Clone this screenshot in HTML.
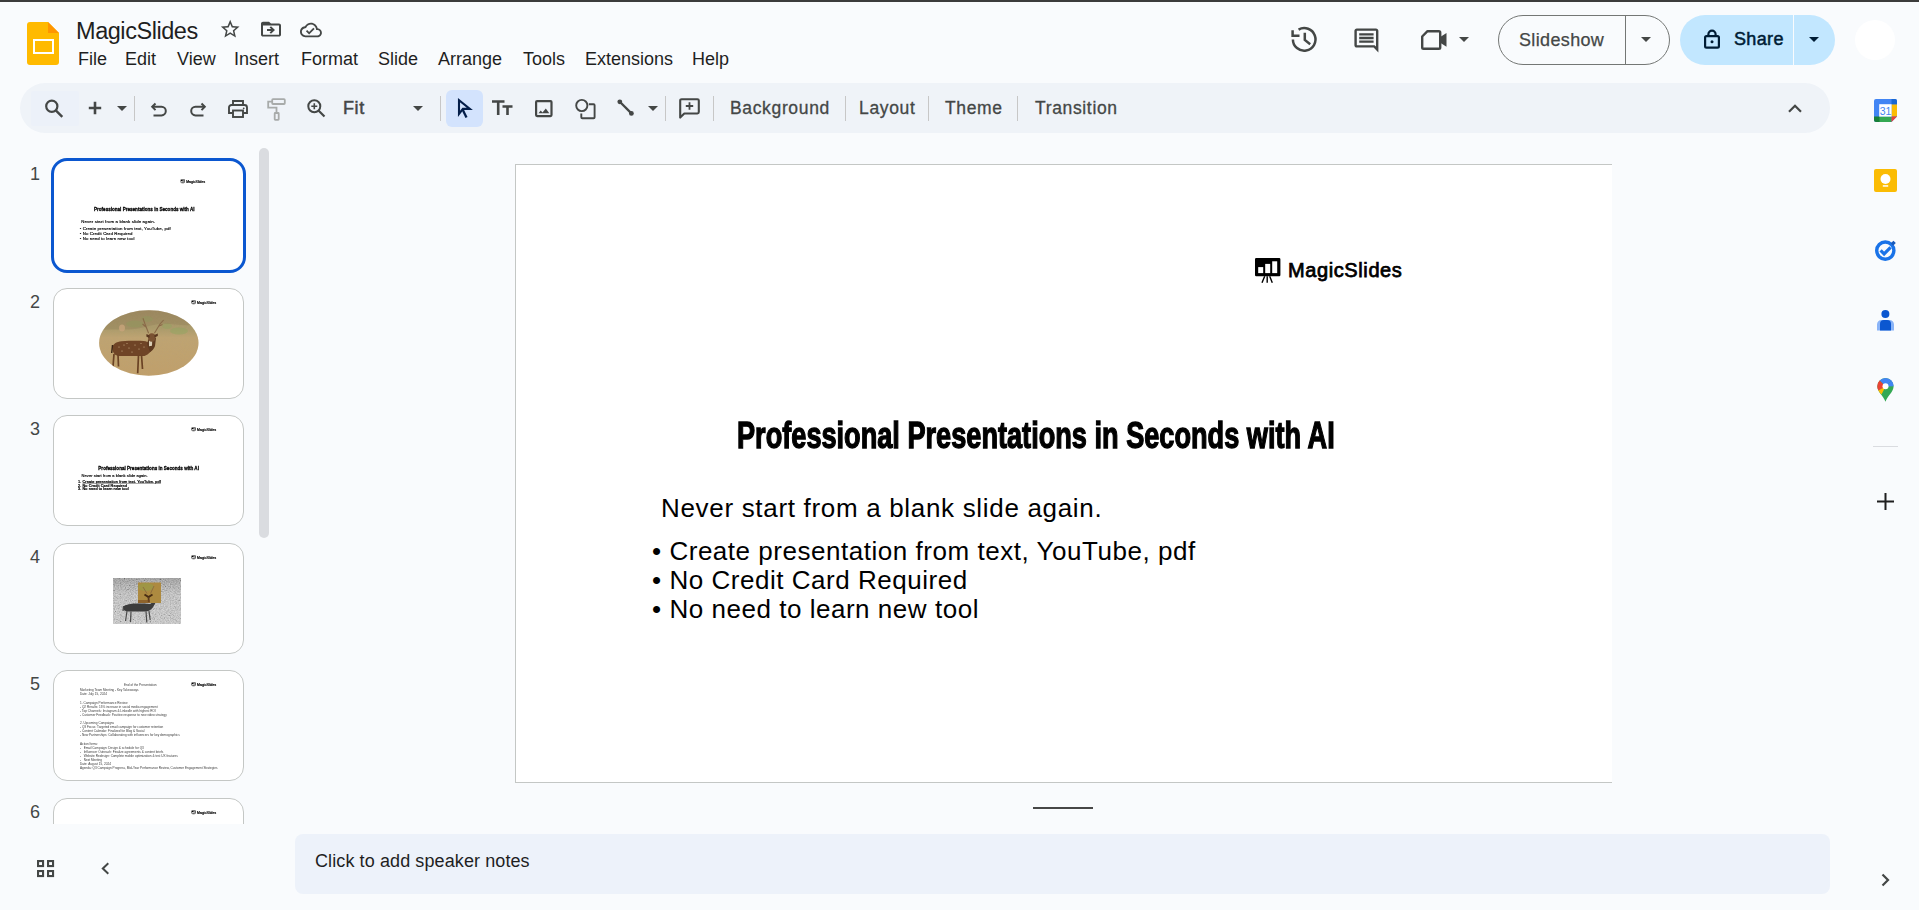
<!DOCTYPE html>
<html><head><meta charset="utf-8">
<style>
*{box-sizing:border-box;margin:0;padding:0}
html,body{width:1919px;height:910px;overflow:hidden;background:#f9fbfd;font-family:"Liberation Sans",sans-serif;color:#1f1f1f}
.a{position:absolute}
svg{position:absolute;overflow:visible}
.menu{position:absolute;top:49px;font-size:18px;line-height:20px;color:#1f1f1f;white-space:nowrap}
.tb{position:absolute;left:20px;top:83px;width:1810px;height:50px;border-radius:25px;background:#eff3f8}
.sep{position:absolute;top:96px;width:1px;height:25px;background:#c7c7c7}
.tbt{position:absolute;top:98px;font-size:17.5px;line-height:20px;color:#444746;white-space:nowrap;letter-spacing:.65px;-webkit-text-stroke:.3px #444746}
.num{position:absolute;left:30px;font-size:18px;line-height:20px;color:#444746}
.thumb{position:absolute;left:53px;width:191px;height:111px;border:1px solid #c4c7c5;border-radius:14px;background:#fff;overflow:hidden}
.slide{position:absolute;left:0;top:0;width:1096px;height:617px;background:#fff}
.ttl{position:absolute;white-space:nowrap;font-weight:bold;font-size:35px;line-height:40px;color:#000;transform-origin:0 0}
.body{position:absolute;white-space:nowrap;font-size:26px;color:#000;letter-spacing:.53px}
.tcx .body{-webkit-text-stroke:.9px #000}
.tcx .ttl{-webkit-text-stroke:2px #000}
</style></head><body>
<div class="a" style="left:0;top:0;width:1919px;height:2px;background:#3c3c3c"></div>

<!-- Slides logo -->
<svg style="left:27px;top:22px" width="32" height="43" viewBox="0 0 32 43">
<path d="M3 0H21L32 11V40a3 3 0 0 1-3 3H3a3 3 0 0 1-3-3V3a3 3 0 0 1 3-3z" fill="#ffba00"/>
<path d="M21 0L32 11H21z" fill="#ff9500"/>
<rect x="7" y="18" width="19" height="13" fill="none" stroke="#fff" stroke-width="2"/>
</svg>
<div class="a" style="left:76px;top:18px;font-size:23.5px;line-height:26px;color:#1f1f1f;letter-spacing:-.45px">MagicSlides</div>

<!-- header icons -->
<svg style="left:219.2px;top:18px" width="22.4" height="22.4" viewBox="0 0 24 24"><path d="M22 9.24l-7.19-.62L12 2 9.19 8.63 2 9.24l5.46 4.73L5.82 21 12 17.27 18.18 21l-1.63-7.03L22 9.24zM12 15.4l-3.76 2.27 1-4.28-3.32-2.88 4.38-.38L12 6.1l1.71 4.04 4.38.38-3.32 2.88 1 4.28L12 15.4z" fill="#444746"/></svg>
<svg style="left:259px;top:18.1px" width="24" height="22.2" viewBox="0 0 24 24" preserveAspectRatio="none"><path d="M20 6h-8l-2-2H4c-1.1 0-2 .9-2 2v12c0 1.1.9 2 2 2h16c1.1 0 2-.9 2-2V8c0-1.1-.9-2-2-2zm0 12H4V8h16v10zm-8.01-9l-1.41 1.41L12.16 12H8v2h4.16l-1.59 1.59L11.99 17 16 13.01 11.99 9z" fill="#444746"/></svg>
<svg style="left:299.8px;top:18.8px" width="21.9" height="21.9" viewBox="0 0 24 24"><path d="M19.35 10.04C18.67 6.59 15.64 4 12 4 9.11 4 6.6 5.64 5.35 8.040 2.34 8.36 0 10.91 0 14c0 3.31 2.69 6 6 6h13c2.76 0 5-2.24 5-5 0-2.64-2.05-4.78-4.65-4.960zM19 18H6c-2.21 0-4-1.79-4-4 0-2.05 1.53-3.76 3.56-3.97l1.07-.11.5-.95C8.08 7.14 9.94 6 12 6c2.62 0 4.88 1.86 5.39 4.43l.3 1.5 1.53.11c1.56.1 2.78 1.41 2.78 2.96 0 1.65-1.35 3-3 3zm-9-3.82l-2.09-2.09L6.5 13.5 10 17l6.01-6.01-1.41-1.41z" fill="#444746"/></svg>

<!-- menu -->
<div class="menu" style="left:78px">File</div>
<div class="menu" style="left:125px">Edit</div>
<div class="menu" style="left:177px">View</div>
<div class="menu" style="left:234px">Insert</div>
<div class="menu" style="left:301px">Format</div>
<div class="menu" style="left:378px">Slide</div>
<div class="menu" style="left:438px">Arrange</div>
<div class="menu" style="left:523px">Tools</div>
<div class="menu" style="left:585px">Extensions</div>
<div class="menu" style="left:692px">Help</div>

<!-- right header -->
<svg style="left:1291px;top:26px" width="26" height="26" viewBox="0 0 26 26"><path d="M7.55 3.6A11.3 11.3 0 1 1 1.9 13.4" fill="none" stroke="#444746" stroke-width="2.5"/><path d="M1.6 4.2v5.6h6.9" fill="none" stroke="#444746" stroke-width="2.5"/><path d="M13.8 6.8V14l5.4 4.2" fill="none" stroke="#444746" stroke-width="2.5"/></svg>
<svg style="left:1351.6px;top:25.6px" width="28.8" height="28.8" viewBox="0 0 24 24"><path d="M21.99 4c0-1.1-.89-2-1.99-2H4c-1.1 0-2 .9-2 2v12c0 1.1.9 2 2 2h14l4 4-.01-18zM20 4v13.17L18.83 16H4V4h16zM6 12h12v2H6zm0-3h12v2H6zm0-3h12v2H6z" fill="#444746"/></svg>
<svg style="left:1421px;top:30px" width="26" height="20" viewBox="0 0 26 20"><path d="M6.5 1.2h11.4a1.3 1.3 0 0 1 1.3 1.3v14.9a1.3 1.3 0 0 1-1.3 1.3H2.5a1.3 1.3 0 0 1-1.3-1.3V6.5z" fill="none" stroke="#444746" stroke-width="2.4" stroke-linejoin="round"/><path d="M19.2 7l6.3-4v13.8l-6.3-4z" fill="#444746"/></svg>
<svg style="left:1459px;top:37px" width="10" height="5" viewBox="0 0 10 5"><path d="M0 0h10L5 5z" fill="#444746"/></svg>

<div class="a" style="left:1498px;top:15px;width:172px;height:50px;border:1px solid #747775;border-radius:25px"></div>
<div class="a" style="left:1625px;top:15px;width:1px;height:50px;background:#747775"></div>
<div class="a" style="left:1519px;top:30px;font-size:18px;line-height:20px;color:#444746;letter-spacing:.35px;-webkit-text-stroke:.25px #444746">Slideshow</div>
<svg style="left:1641px;top:37px" width="10" height="5" viewBox="0 0 10 5"><path d="M0 0h10L5 5z" fill="#444746"/></svg>

<div class="a" style="left:1680px;top:15px;width:155px;height:50px;border-radius:25px;background:#c2e7ff"></div>
<div class="a" style="left:1793px;top:15px;width:1px;height:50px;background:#f9fbfd"></div>
<svg style="left:1704px;top:28.8px" width="16" height="20" viewBox="0 0 16 20"><rect x="1.1" y="7.1" width="13.8" height="11.6" rx="1.4" fill="none" stroke="#001d35" stroke-width="2.2"/><path d="M4.4 7.1V5.2a3.6 3.6 0 0 1 7.2 0v1.9" fill="none" stroke="#001d35" stroke-width="2.2"/><circle cx="8" cy="12.8" r="1.5" fill="#001d35"/></svg>
<div class="a" style="left:1734px;top:28.5px;font-size:18px;line-height:20px;color:#001d35;letter-spacing:.35px;-webkit-text-stroke:.5px #001d35">Share</div>
<svg style="left:1809px;top:37px" width="10" height="5" viewBox="0 0 10 5"><path d="M0 0h10L5 5z" fill="#001d35"/></svg>
<div class="a" style="left:1855px;top:20px;width:40px;height:40px;border-radius:50%;background:#fff"></div>

<!-- toolbar -->
<div class="tb"></div>
<div class="a" style="left:31px;top:91px;width:48px;height:35px;background:#ecf1f9;border-radius:2px"></div>

<!-- toolbar icons -->
<svg style="left:43px;top:98px" width="22" height="22" viewBox="0 0 22 22"><circle cx="8.8" cy="8.3" r="5.6" fill="none" stroke="#444746" stroke-width="2.2"/><path d="M12.8 12.3l6.5 6.5" stroke="#444746" stroke-width="2.4"/></svg>
<svg style="left:87px;top:100px" width="16" height="16" viewBox="0 0 16 16"><path d="M8 1.8v12.4M1.8 8h12.4" stroke="#444746" stroke-width="2.6"/></svg>
<svg style="left:117px;top:106px" width="10" height="5" viewBox="0 0 10 5"><path d="M0 0h10L5 5z" fill="#444746"/></svg>
<div class="sep" style="left:134px"></div>
<svg style="left:151px;top:102px" width="16" height="15" viewBox="0 0 16 15"><path d="M4.5 1.5L1.2 4.8l3.3 3.3" fill="none" stroke="#444746" stroke-width="2"/><path d="M1.5 4.8h9a4.3 4.3 0 0 1 0 8.6H2.5" fill="none" stroke="#444746" stroke-width="2"/></svg>
<svg style="left:190px;top:102px" width="16" height="15" viewBox="0 0 16 15"><path d="M11.5 1.5l3.3 3.3-3.3 3.3" fill="none" stroke="#444746" stroke-width="2"/><path d="M14.5 4.8h-9a4.3 4.3 0 0 0 0 8.6h8" fill="none" stroke="#444746" stroke-width="2"/></svg>
<svg style="left:228px;top:100px" width="20" height="18" viewBox="0 0 20 18"><path d="M5 5V1h10v4" fill="none" stroke="#444746" stroke-width="1.9"/><path d="M4.5 13H1V7.5a2.5 2.5 0 0 1 2.5-2.5h13A2.5 2.5 0 0 1 19 7.5V13h-3.5" fill="none" stroke="#444746" stroke-width="1.9"/><rect x="5" y="10.5" width="10" height="6.5" fill="none" stroke="#444746" stroke-width="1.9"/><circle cx="15.7" cy="8.3" r=".9" fill="#444746"/></svg>
<svg style="left:267px;top:98px" width="19" height="23" viewBox="0 0 19 23"><rect x="5.2" y="1.2" width="12.6" height="4.8" rx=".8" fill="none" stroke="#a8abaa" stroke-width="1.8"/><path d="M5.2 3.6H1.2v6h8.3v5.5" fill="none" stroke="#a8abaa" stroke-width="1.8"/><rect x="7.7" y="15" width="4" height="6.8" rx=".5" fill="none" stroke="#a8abaa" stroke-width="1.8"/></svg>
<svg style="left:307px;top:99px" width="19" height="19" viewBox="0 0 19 19"><circle cx="7.3" cy="7.3" r="6" fill="none" stroke="#444746" stroke-width="2"/><path d="M11.5 11.5l6 6" stroke="#444746" stroke-width="2.2"/><path d="M7.3 4.3v6M4.3 7.3h6" stroke="#444746" stroke-width="1.6"/></svg>
<div class="a" style="left:343px;top:98px;font-size:18px;line-height:20px;color:#444746;letter-spacing:.6px;-webkit-text-stroke:.5px #444746">Fit</div>
<svg style="left:413px;top:106px" width="10" height="5" viewBox="0 0 10 5"><path d="M0 0h10L5 5z" fill="#444746"/></svg>
<div class="sep" style="left:440px"></div>
<div class="a" style="left:446px;top:90px;width:37px;height:37px;border-radius:6px;background:#d3e3fd"></div>
<svg style="left:457px;top:98px" width="15" height="21" viewBox="0 0 15 21"><path d="M2 2.2V16l3.9-5.1h7z" fill="none" stroke="#041e49" stroke-width="2.1" stroke-linejoin="miter"/><path d="M5.6 11.5l3.9 8" stroke="#041e49" stroke-width="2.3"/></svg>
<svg style="left:492px;top:100px" width="21" height="16" viewBox="0 0 21 16"><path d="M0 1.5h12.5M6.2 1.5V15M10.5 6.5h10M15.5 6.5V15" stroke="#444746" stroke-width="2.6"/></svg>
<svg style="left:535px;top:100px" width="18" height="18" viewBox="0 0 18 18"><rect x="1.1" y="1.1" width="15.4" height="15" rx="1" fill="none" stroke="#444746" stroke-width="2.2"/><path d="M3.5 13.2l2.2-2.6 1.8 1.8 3.3-4 3.5 4.8z" fill="#444746"/></svg>
<svg style="left:575px;top:99px" width="21" height="20" viewBox="0 0 21 20"><circle cx="6.8" cy="6.5" r="5.6" fill="none" stroke="#444746" stroke-width="1.9"/><path d="M13.8 5.2h4.8a1 1 0 0 1 1 1v12a1 1 0 0 1-1 1h-11.3a1 1 0 0 1-1-1v-3.7" fill="none" stroke="#444746" stroke-width="1.9"/></svg>
<svg style="left:617px;top:99px" width="18" height="18" viewBox="0 0 18 18"><path d="M2.8 2.8l11.6 11.6" stroke="#444746" stroke-width="2.3"/><circle cx="2.8" cy="2.8" r="2.4" fill="#444746"/><circle cx="14.4" cy="14.4" r="2.4" fill="#444746"/></svg>
<svg style="left:648px;top:106px" width="10" height="5" viewBox="0 0 10 5"><path d="M0 0h10L5 5z" fill="#444746"/></svg>
<div class="sep" style="left:665px"></div>
<svg style="left:679px;top:98px" width="21" height="21" viewBox="0 0 21 21"><path d="M1.2 2.6a1.4 1.4 0 0 1 1.4-1.4h15.8a1.4 1.4 0 0 1 1.4 1.4v11.5a1.4 1.4 0 0 1-1.4 1.4H5.3l-4.1 4.1z" fill="none" stroke="#444746" stroke-width="2.1" stroke-linejoin="round"/><path d="M10.5 4.3v7.4M6.8 8h7.4" stroke="#444746" stroke-width="1.8"/></svg>
<div class="sep" style="left:713px"></div>
<div class="tbt" style="left:730px">Background</div>
<div class="sep" style="left:845px"></div>
<div class="tbt" style="left:859px">Layout</div>
<div class="sep" style="left:928px"></div>
<div class="tbt" style="left:945px">Theme</div>
<div class="sep" style="left:1017px"></div>
<div class="tbt" style="left:1035px">Transition</div>
<svg style="left:1788px;top:104px" width="14" height="9" viewBox="0 0 14 9"><path d="M1 7.8l6-6 6 6" fill="none" stroke="#444746" stroke-width="2.2"/></svg>

<!-- right sidebar -->
<svg style="left:1874px;top:99px" width="23" height="23" viewBox="0 0 23 23">
<path d="M2 0h19a2 2 0 0 1 2 2v15.5L17.5 23H2a2 2 0 0 1-2-2V2a2 2 0 0 1 2-2z" fill="#4285f4"/>
<path d="M17.5 0H21a2 2 0 0 1 2 2v3.5h-5.5z" fill="#1967d2"/>
<path d="M17.5 5.5H23v12h-5.5z" fill="#fbbc04"/>
<path d="M5 17.5h12.5V23H5z" fill="#34a853"/>
<path d="M0 17.5h5.5V23H2a2 2 0 0 1-2-2z" fill="#188038"/>
<path d="M17.5 17.5H23L17.5 23z" fill="#ea4335"/>
<rect x="5.2" y="5.2" width="12.4" height="12.4" fill="#fff"/>
<text x="11.4" y="15.6" font-family="Liberation Sans" font-size="10.5" fill="#4285f4" text-anchor="middle" letter-spacing="-.3">31</text>
</svg>
<svg style="left:1874px;top:169px" width="23" height="23" viewBox="0 0 23 23"><rect width="23" height="23" rx="2" fill="#fbbc04"/><circle cx="11.5" cy="10" r="5" fill="#fff"/><rect x="8.8" y="16.2" width="5.4" height="1.5" fill="#fff"/></svg>
<svg style="left:1874px;top:239px" width="23" height="23" viewBox="0 0 23 23"><circle cx="11.3" cy="11.6" r="8.6" fill="none" stroke="#1a73e8" stroke-width="3.4"/><path d="M6.6 11.4l3.5 3.5 6.5-6.6" fill="none" stroke="#1a73e8" stroke-width="3.2"/><path d="M16.8 4.2l2.6-2.5 2.4 2.3-2.7 2.7z" fill="#185abc"/></svg>
<svg style="left:1876px;top:309px" width="19" height="23" viewBox="0 0 19 23"><circle cx="9.4" cy="5" r="4" fill="#0b57d0"/><path d="M1 21.5V15.5a4.5 4.5 0 0 1 4.5-4.5h8a4.5 4.5 0 0 1 4.5 4.5v6z" fill="#8ab4f8"/><path d="M4 21.5V15a4 4 0 0 1 4-4h3a4 4 0 0 1 4 4v6.5z" fill="#0b57d0"/></svg>
<svg style="left:1877px;top:378px" width="17" height="24" viewBox="0 0 17 24">
<path d="M8.5 0A8.3 8.3 0 0 1 16.6 8.2c0 5.8-6.3 9.5-8.1 15.6C6.6 17.7.3 14 .3 8.2A8.3 8.3 0 0 1 8.5 0z" fill="#34a853"/>
<path d="M2.6 2.5A8.3 8.3 0 0 1 14.5 2.5L8.5 8.5z" fill="#4285f4"/>
<path d="M14.5 2.5A8.3 8.3 0 0 1 16.6 8.2L8.5 8.5z" fill="#4285f4"/>
<path d="M2.6 2.5L8.5 8.5 1.3 12.5A8 8 0 0 1 .3 8.2 8.2 8.2 0 0 1 2.6 2.5z" fill="#ea4335"/>
<path d="M1.3 12.5L8.5 8.5 4.5 16.5C3.3 15.1 2 13.8 1.3 12.5z" fill="#fbbc04"/>
<circle cx="8.5" cy="8.3" r="3" fill="#fff"/>
</svg>
<div class="a" style="left:1873px;top:446px;width:25px;height:1px;background:#dadce0"></div>
<svg style="left:1877px;top:493px" width="17" height="17" viewBox="0 0 17 17"><path d="M8.5 0v17M0 8.5h17" stroke="#1f1f1f" stroke-width="2"/></svg>
<svg style="left:1881px;top:873px" width="9" height="14" viewBox="0 0 9 14"><path d="M1.5 1.5l5.5 5.5-5.5 5.5" fill="none" stroke="#444746" stroke-width="2.2"/></svg>

<!-- left panel -->
<div class="a" style="left:259px;top:148px;width:10px;height:390px;border-radius:5px;background:#dadce0"></div>
<div class="num" style="top:164px">1</div>
<div class="num" style="top:292px">2</div>
<div class="num" style="top:419px">3</div>
<div class="num" style="top:547px">4</div>
<div class="num" style="top:674px">5</div>
<div class="num" style="top:802px">6</div>
<div class="a" style="left:0;top:148px;width:290px;height:676px;overflow:hidden"><div class="a" style="left:0;top:-148px;width:290px;height:1000px">
<div class="thumb" style="top:287.5px"></div>
<div class="thumb" style="top:415px"></div>
<div class="thumb" style="top:542.5px"></div>
<div class="thumb" style="top:670px"></div>
<div class="thumb" style="top:797.5px"></div>
<div class="thumb" style="left:51px;top:158px;width:195px;height:115px;border:3px solid #0b57d0;border-radius:16px"></div>
<div class="a tcx" style="left:57.4px;top:163.6px;width:1096px;height:617px;transform:scale(0.1673);transform-origin:0 0"><div class="a" style="left:738.8px;top:92.9px"><svg style="left:0;top:0" width="26" height="26" viewBox="0 0 26 26"><path d="M1.2 0h23a1.2 1.2 0 0 1 1.2 1.2v15.8a1.2 1.2 0 0 1-1.2 1.2h-23A1.2 1.2 0 0 1 0 17V1.2A1.2 1.2 0 0 1 1.2 0z" fill="#000"/><rect x="3.2" y="9.1" width="5" height="6" fill="#fff"/><rect x="10.2" y="5.9" width="5" height="9.2" fill="#fff"/><rect x="17.2" y="3.3" width="5" height="11.8" fill="#fff"/><path d="M9.7 18.2L7 24.8M12.2 18.2v6.6M14.7 18.2l2.6 6.6" stroke="#000" stroke-width="1.4"/></svg><div class="a" style="left:33.2px;top:-2.9px;font-size:20px;line-height:30px;color:#000;letter-spacing:.6px;-webkit-text-stroke:1.2px #000;white-space:nowrap">MagicSlides</div></div><div class="ttl" style="left:220.8px;top:250.5px;font-size:37px;transform:scaleX(.738)">Professional Presentations in Seconds with AI</div><div class="body" style="left:145px;top:328px;line-height:30px;letter-spacing:.68px">Never start from a blank slide again.</div><div class="body" style="left:136px;top:372px;line-height:29.2px">&bull; Create presentation from text, YouTube, pdf<br>&bull; No Credit Card Required<br>&bull; No need to learn new tool</div></div>
<svg style="left:99px;top:310px" width="100" height="66" viewBox="0 0 100 66">
<defs><clipPath id="ce"><ellipse cx="49.8" cy="33" rx="49.7" ry="32.8"/></clipPath>
<linearGradient id="gd" x1="0" y1="0" x2="0" y2="1"><stop offset="0" stop-color="#9e8a5f"/><stop offset=".28" stop-color="#a99a68"/><stop offset=".42" stop-color="#c0a470"/><stop offset="1" stop-color="#c29f68"/></linearGradient>
<filter id="nz" x="0" y="0" width="100%" height="100%"><feTurbulence type="fractalNoise" baseFrequency=".6" numOctaves="2" seed="3"/><feColorMatrix values="0 0 0 0 .45  0 0 0 0 .35  0 0 0 0 .2  0 0 0 .35 0"/><feComposite in2="SourceGraphic" operator="in"/></filter></defs>
<g clip-path="url(#ce)">
<rect width="100" height="66" fill="url(#gd)"/>
<rect width="100" height="66" fill="#000" filter="url(#nz)"/>
<ellipse cx="36" cy="14" rx="9" ry="3.5" fill="#8fa660" opacity=".5"/>
<ellipse cx="48" cy="9" rx="6" ry="3" fill="#8fa660" opacity=".45"/>
<ellipse cx="80" cy="21" rx="9" ry="3.5" fill="#8fa660" opacity=".5"/>
<ellipse cx="68" cy="16" rx="5" ry="3" fill="#8fa660" opacity=".4"/>
<path d="M0 0h100v14c-20 4-30-4-50 2S15 18 0 20z" fill="#8f7a55" opacity=".35"/>
<path d="M13.5 38c0-4 4-6.5 9-6.8 7-.4 15-.6 22-.3 3 .2 5 1.5 6.5 2.5l2.5 3c0 3-2 6-5 8l-3 1.5H20c-4 0-6.5-3-6.5-7.9z" fill="#6f4426"/>
<path d="M48 34l2-7 4-1 3 2-1 8c-1 3-3 5-5 6z" fill="#5e3a20"/>
<path d="M50 27.5h3.3l-.3 8.3-3 .5z" fill="#d9cdb4"/>
<ellipse cx="52.8" cy="27.5" rx="3.6" ry="4.2" fill="#7a5232"/>
<path d="M47.5 24l3.3 1.5-.5 2.5-3-1.5zM58.8 23.5l-3.5 1.5.3 2.5 3.2-1.5z" fill="#5a3820"/>
<path d="M49.6 23.3L46 14l-2-5.7M47 17l-3.5-3M55.4 23.3L61 14l3.6-4M60 16l3.5-1.5" stroke="#8a6a48" stroke-width="1.1" fill="none"/>
<path d="M15 44l-1 12.7M19 44.5l.5 12M39.5 45l-.8 18.3M42.5 45l1 14" stroke="#6a4224" stroke-width="1.7" fill="none"/>
<path d="M13.5 35l-.8 8" stroke="#3a2414" stroke-width="1.4"/>
<ellipse cx="23" cy="18" rx="3" ry="3.5" fill="#c8a47a" opacity=".8"/>
<g fill="#e6cfa4" opacity=".8"><circle cx="20" cy="37" r=".6"/><circle cx="25" cy="35" r=".6"/><circle cx="30" cy="38" r=".6"/><circle cx="36" cy="35" r=".6"/><circle cx="40" cy="39" r=".6"/><circle cx="23" cy="41" r=".6"/><circle cx="33" cy="42" r=".6"/><circle cx="45" cy="37" r=".6"/><circle cx="28" cy="33.5" r=".5"/><circle cx="42" cy="33.5" r=".5"/></g>
</g></svg>
<div class="a tcx" style="left:57.3px;top:291.8px;width:1096px;height:617px;transform:scale(0.1673);transform-origin:0 0"><div class="a" style="left:804px;top:51px"><svg style="left:0;top:0" width="26" height="26" viewBox="0 0 26 26"><path d="M1.2 0h23a1.2 1.2 0 0 1 1.2 1.2v15.8a1.2 1.2 0 0 1-1.2 1.2h-23A1.2 1.2 0 0 1 0 17V1.2A1.2 1.2 0 0 1 1.2 0z" fill="#000"/><rect x="3.2" y="9.1" width="5" height="6" fill="#fff"/><rect x="10.2" y="5.9" width="5" height="9.2" fill="#fff"/><rect x="17.2" y="3.3" width="5" height="11.8" fill="#fff"/><path d="M9.7 18.2L7 24.8M12.2 18.2v6.6M14.7 18.2l2.6 6.6" stroke="#000" stroke-width="1.4"/></svg><div class="a" style="left:33.2px;top:-2.9px;font-size:20px;line-height:30px;color:#000;letter-spacing:.6px;-webkit-text-stroke:1.2px #000;white-space:nowrap">MagicSlides</div></div></div>
<div class="a tcx" style="left:57.3px;top:418.8px;width:1096px;height:617px;transform:scale(0.1673);transform-origin:0 0"><div class="a" style="left:804px;top:51px"><svg style="left:0;top:0" width="26" height="26" viewBox="0 0 26 26"><path d="M1.2 0h23a1.2 1.2 0 0 1 1.2 1.2v15.8a1.2 1.2 0 0 1-1.2 1.2h-23A1.2 1.2 0 0 1 0 17V1.2A1.2 1.2 0 0 1 1.2 0z" fill="#000"/><rect x="3.2" y="9.1" width="5" height="6" fill="#fff"/><rect x="10.2" y="5.9" width="5" height="9.2" fill="#fff"/><rect x="17.2" y="3.3" width="5" height="11.8" fill="#fff"/><path d="M9.7 18.2L7 24.8M12.2 18.2v6.6M14.7 18.2l2.6 6.6" stroke="#000" stroke-width="1.4"/></svg><div class="a" style="left:33.2px;top:-2.9px;font-size:20px;line-height:30px;color:#000;letter-spacing:.6px;-webkit-text-stroke:1.2px #000;white-space:nowrap">MagicSlides</div></div><div class="ttl" style="left:247px;top:273px;font-size:37px;transform:scaleX(.738)">Professional Presentations in Seconds with AI</div><div class="body" style="left:147px;top:325px;line-height:28px;font-size:24px;letter-spacing:.3px">Never start from a blank slide again.</div><div class="body" style="left:125px;top:365px;line-height:21.5px;font-size:23px;letter-spacing:.55px;-webkit-text-stroke:1.4px #000">1. <u>Create presentation from text, YouTube, pdf</u><br>2. No Credit Card Required<br>3. No need to learn new tool</div></div>
<svg style="left:113px;top:578px" width="68" height="46" viewBox="0 0 68 46">
<defs><linearGradient id="gb" x1="0" y1="0" x2="0" y2="1"><stop offset="0" stop-color="#9a9a9a"/><stop offset=".35" stop-color="#c4c4c4"/><stop offset="1" stop-color="#cdcdcd"/></linearGradient>
<filter id="nz2" x="0" y="0" width="100%" height="100%"><feTurbulence type="fractalNoise" baseFrequency=".8" numOctaves="2" seed="7"/><feColorMatrix values="1.6 0 0 0 -.3  1.6 0 0 0 -.3  1.6 0 0 0 -.3  0 0 0 0 .3"/><feComposite in2="SourceGraphic" operator="in"/></filter></defs>
<rect width="68" height="46" fill="url(#gb)"/>
<rect width="68" height="46" fill="#000" filter="url(#nz2)"/>
<path d="M10 30c0-3 6-4.5 14-4.5 6 0 10 0 13 .5l4-2.5 1.5 1.5-3 5c-2 2.5-5 3.5-7 3.5H16c-4 0-6-1.5-6-3.5z" fill="#3c3c3c"/>
<path d="M14 33l-1.5 10M18 33.5l-.5 10.5M33 33.5l.8 11M36 33l1.2 9M10.5 28l-.5 5" stroke="#4a4a4a" stroke-width="1.2"/>
<rect x="25" y="4.5" width="23" height="20.5" fill="#ad8a40"/>
<ellipse cx="33" cy="9" rx="8" ry="4" fill="#94a048" opacity=".55"/>
<path d="M30 9l4 6.5M41 8l-3.5 7.5" stroke="#8a6a40" stroke-width=".9" fill="none"/>
<path d="M31.5 16.5l4 2.5 4-2.5" stroke="#4a2e14" stroke-width="2" fill="none"/>
<path d="M35.5 19l.3 5" stroke="#5a3a1c" stroke-width="1.8"/>
<rect x="25" y="22" width="12" height="3" fill="#7a4a20" opacity=".6"/>
</svg>
<div class="a tcx" style="left:57.3px;top:546.8px;width:1096px;height:617px;transform:scale(0.1673);transform-origin:0 0"><div class="a" style="left:804px;top:51px"><svg style="left:0;top:0" width="26" height="26" viewBox="0 0 26 26"><path d="M1.2 0h23a1.2 1.2 0 0 1 1.2 1.2v15.8a1.2 1.2 0 0 1-1.2 1.2h-23A1.2 1.2 0 0 1 0 17V1.2A1.2 1.2 0 0 1 1.2 0z" fill="#000"/><rect x="3.2" y="9.1" width="5" height="6" fill="#fff"/><rect x="10.2" y="5.9" width="5" height="9.2" fill="#fff"/><rect x="17.2" y="3.3" width="5" height="11.8" fill="#fff"/><path d="M9.7 18.2L7 24.8M12.2 18.2v6.6M14.7 18.2l2.6 6.6" stroke="#000" stroke-width="1.4"/></svg><div class="a" style="left:33.2px;top:-2.9px;font-size:20px;line-height:30px;color:#000;letter-spacing:.6px;-webkit-text-stroke:1.2px #000;white-space:nowrap">MagicSlides</div></div></div>
<div class="a" style="left:124.1px;top:682.72px;font-size:24px;line-height:30px;white-space:nowrap;color:#3a3a3a;transform:scale(0.13);transform-origin:0 0">End of the Presentation</div><div class="a" style="left:79.8px;top:687.82px;font-size:24px;line-height:30px;white-space:nowrap;color:#3a3a3a;transform:scale(0.13);transform-origin:0 0">Marketing Team Meeting - Key Takeaways</div><div class="a" style="left:79.8px;top:691.92px;font-size:24px;line-height:30px;white-space:nowrap;color:#3a3a3a;transform:scale(0.13);transform-origin:0 0">Date: July 15, 2024</div><div class="a" style="left:79.8px;top:700.92px;font-size:24px;line-height:30px;white-space:nowrap;color:#3a3a3a;transform:scale(0.13);transform-origin:0 0">1. Campaign Performance Review</div><div class="a" style="left:79.8px;top:704.82px;font-size:24px;line-height:30px;white-space:nowrap;color:#3a3a3a;transform:scale(0.13);transform-origin:0 0">- Q2 Results: 15% increase in social media engagement</div><div class="a" style="left:79.8px;top:708.82px;font-size:24px;line-height:30px;white-space:nowrap;color:#3a3a3a;transform:scale(0.13);transform-origin:0 0">- Top Channels: Instagram &amp; LinkedIn with highest ROI</div><div class="a" style="left:79.8px;top:712.82px;font-size:24px;line-height:30px;white-space:nowrap;color:#3a3a3a;transform:scale(0.13);transform-origin:0 0">- Customer Feedback: Positive response to new video strategy</div><div class="a" style="left:79.8px;top:720.82px;font-size:24px;line-height:30px;white-space:nowrap;color:#3a3a3a;transform:scale(0.13);transform-origin:0 0">2. Upcoming Campaigns</div><div class="a" style="left:79.8px;top:724.82px;font-size:24px;line-height:30px;white-space:nowrap;color:#3a3a3a;transform:scale(0.13);transform-origin:0 0">- Q3 Focus: Targeted email campaign for customer retention</div><div class="a" style="left:79.8px;top:728.82px;font-size:24px;line-height:30px;white-space:nowrap;color:#3a3a3a;transform:scale(0.13);transform-origin:0 0">- Content Calendar: Finalized for Blog &amp; Social</div><div class="a" style="left:79.8px;top:732.82px;font-size:24px;line-height:30px;white-space:nowrap;color:#3a3a3a;transform:scale(0.13);transform-origin:0 0">- New Partnerships: Collaborating with influencers for key demographics</div><div class="a" style="left:79.8px;top:741.72px;font-size:24px;line-height:30px;white-space:nowrap;color:#3a3a3a;transform:scale(0.13);transform-origin:0 0">Action Items:</div><div class="a" style="left:79.8px;top:745.82px;font-size:24px;line-height:30px;white-space:nowrap;color:#3a3a3a;transform:scale(0.13);transform-origin:0 0">-&nbsp;&nbsp;&nbsp;Email Campaign: Design &amp; schedule for Q3</div><div class="a" style="left:79.8px;top:749.72px;font-size:24px;line-height:30px;white-space:nowrap;color:#3a3a3a;transform:scale(0.13);transform-origin:0 0">-&nbsp;&nbsp;&nbsp;Influencer Outreach: Finalize agreements &amp; content briefs</div><div class="a" style="left:79.8px;top:753.82px;font-size:24px;line-height:30px;white-space:nowrap;color:#3a3a3a;transform:scale(0.13);transform-origin:0 0">-&nbsp;&nbsp;&nbsp;Website Redesign: Complete mobile optimization &amp; test UX features</div><div class="a" style="left:79.8px;top:757.72px;font-size:24px;line-height:30px;white-space:nowrap;color:#3a3a3a;transform:scale(0.13);transform-origin:0 0">-&nbsp;&nbsp;&nbsp;Next Meeting</div><div class="a" style="left:79.8px;top:761.82px;font-size:24px;line-height:30px;white-space:nowrap;color:#3a3a3a;transform:scale(0.13);transform-origin:0 0">Date: August 15, 2024</div><div class="a" style="left:79.8px;top:766.02px;font-size:24px;line-height:30px;white-space:nowrap;color:#3a3a3a;transform:scale(0.13);transform-origin:0 0">Agenda: Q3 Campaign Progress, Mid-Year Performance Review, Customer Engagement Strategies</div>
<div class="a tcx" style="left:57.3px;top:673.8px;width:1096px;height:617px;transform:scale(0.1673);transform-origin:0 0"><div class="a" style="left:804px;top:51px"><svg style="left:0;top:0" width="26" height="26" viewBox="0 0 26 26"><path d="M1.2 0h23a1.2 1.2 0 0 1 1.2 1.2v15.8a1.2 1.2 0 0 1-1.2 1.2h-23A1.2 1.2 0 0 1 0 17V1.2A1.2 1.2 0 0 1 1.2 0z" fill="#000"/><rect x="3.2" y="9.1" width="5" height="6" fill="#fff"/><rect x="10.2" y="5.9" width="5" height="9.2" fill="#fff"/><rect x="17.2" y="3.3" width="5" height="11.8" fill="#fff"/><path d="M9.7 18.2L7 24.8M12.2 18.2v6.6M14.7 18.2l2.6 6.6" stroke="#000" stroke-width="1.4"/></svg><div class="a" style="left:33.2px;top:-2.9px;font-size:20px;line-height:30px;color:#000;letter-spacing:.6px;-webkit-text-stroke:1.2px #000;white-space:nowrap">MagicSlides</div></div></div>
<div class="a tcx" style="left:57.3px;top:801.8px;width:1096px;height:617px;transform:scale(0.1673);transform-origin:0 0"><div class="a" style="left:804px;top:51px"><svg style="left:0;top:0" width="26" height="26" viewBox="0 0 26 26"><path d="M1.2 0h23a1.2 1.2 0 0 1 1.2 1.2v15.8a1.2 1.2 0 0 1-1.2 1.2h-23A1.2 1.2 0 0 1 0 17V1.2A1.2 1.2 0 0 1 1.2 0z" fill="#000"/><rect x="3.2" y="9.1" width="5" height="6" fill="#fff"/><rect x="10.2" y="5.9" width="5" height="9.2" fill="#fff"/><rect x="17.2" y="3.3" width="5" height="11.8" fill="#fff"/><path d="M9.7 18.2L7 24.8M12.2 18.2v6.6M14.7 18.2l2.6 6.6" stroke="#000" stroke-width="1.4"/></svg><div class="a" style="left:33.2px;top:-2.9px;font-size:20px;line-height:30px;color:#000;letter-spacing:.6px;-webkit-text-stroke:1.2px #000;white-space:nowrap">MagicSlides</div></div></div>
</div></div>
<svg style="left:37px;top:860px" width="18" height="18" viewBox="0 0 18 18"><g fill="none" stroke="#444746" stroke-width="2.1"><rect x="1.05" y="1.05" width="5" height="5"/><rect x="11.05" y="1.05" width="5" height="5"/><rect x="1.05" y="11.05" width="5" height="5"/><rect x="11.05" y="11.05" width="5" height="5"/></g></svg>
<svg style="left:101px;top:862px" width="9" height="13" viewBox="0 0 9 13"><path d="M7.3 1.2L1.8 6.5l5.5 5.3" fill="none" stroke="#444746" stroke-width="2"/></svg>

<!-- main slide -->
<div class="a" style="left:515px;top:164px;width:1097px;height:619px;border:1px solid #c4c7c5;border-right:0;background:#fff"></div>
<div class="a" style="left:1033px;top:807px;width:60px;height:2px;background:#474747"></div>


<!-- slide content -->
<div class="a" style="left:516px;top:165px;width:1096px;height:617px;overflow:hidden">
<div class="slide" style="background:transparent">
<svg style="left:738.8px;top:92.9px" width="26" height="26" viewBox="0 0 26 26"><path d="M1.2 0h23a1.2 1.2 0 0 1 1.2 1.2v15.8a1.2 1.2 0 0 1-1.2 1.2h-23A1.2 1.2 0 0 1 0 17V1.2A1.2 1.2 0 0 1 1.2 0z" fill="#000"/><rect x="3.2" y="9.1" width="5" height="6" fill="#fff"/><rect x="10.2" y="5.9" width="5" height="9.2" fill="#fff"/><rect x="17.2" y="3.3" width="5" height="11.8" fill="#fff"/><path d="M9.7 18.2L7 24.8M12.2 18.2v6.6M14.7 18.2l2.6 6.6" stroke="#000" stroke-width="1.4"/></svg>
<div class="a" style="left:772px;top:90px;font-size:20px;line-height:30px;color:#000;letter-spacing:.6px;-webkit-text-stroke:.75px #000">MagicSlides</div>
<div class="ttl" style="left:221px;top:250.5px;font-size:36.6px;transform:scaleX(.742);-webkit-text-stroke:1.3px #000">Professional Presentations in Seconds with AI</div>
<div class="body" style="left:145px;top:328px;line-height:30px;letter-spacing:.68px">Never start from a blank slide again.</div>
<div class="body" style="left:136px;top:372px;line-height:29.2px">&bull; Create presentation from text, YouTube, pdf<br>&bull; No Credit Card Required<br>&bull; No need to learn new tool</div>
</div></div>

<!-- notes -->
<div class="a" style="left:295px;top:834px;width:1535px;height:60px;border-radius:8px;background:#edf2fa"></div>
<div class="a" style="left:315px;top:851px;font-size:18px;line-height:20px;color:#1f1f1f;letter-spacing:.1px">Click to add speaker notes</div>
</body></html>
